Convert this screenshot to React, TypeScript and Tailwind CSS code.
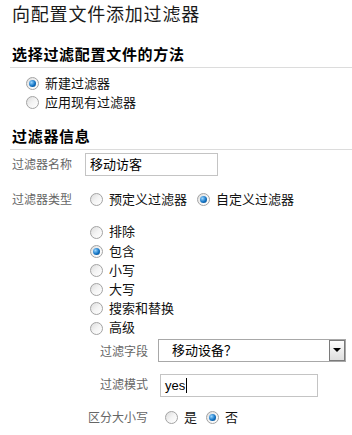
import React from 'react';

const font = { fontFamily: '"Liberation Sans", "Noto Sans CJK SC", sans-serif' };

interface RadioProps {
  checked?: boolean;
}

const Radio = ({ checked }: RadioProps) => (
  <span className="inline-flex h-[13px] w-[13px] shrink-0 items-center justify-center rounded-full border border-[#a3a3a3] bg-gradient-to-br from-[#dcdcdc] via-[#f4f4f4] to-[#ffffff]">
    {checked && (
      <span className="h-[7px] w-[7px] rounded-full bg-[radial-gradient(circle_at_35%_35%,#9ad6ff,#1273c4_55%,#053f74)]" />
    )}
  </span>
);

const RadioItem = ({ checked, label, className = '' }: { checked?: boolean; label: string; className?: string }) => (
  <label className={`flex items-center gap-[6px] text-[13px] text-[#111] ${className}`}>
    <Radio checked={checked} />
    <span>{label}</span>
  </label>
);

const filterTypes = [
  { label: '排除', checked: false },
  { label: '包含', checked: true },
  { label: '小写', checked: false },
  { label: '大写', checked: false },
  { label: '搜索和替换', checked: false },
  { label: '高级', checked: false },
];

export default function App() {
  return (
    <div className="h-[435px] w-[352px] overflow-hidden bg-white" style={font}>
      <h1 className="flex h-[30px] items-center pl-[12px] text-[18px] font-normal tracking-[0.8px] text-[#1a1a1a]">
        向配置文件添加过滤器
      </h1>

      <h2 className="ml-[10px] mt-[14px] flex h-[24px] items-center border-b border-[#dcdcdc] pl-[2px] text-[15px] font-bold tracking-[0.7px] text-black">
        选择过滤配置文件的方法
      </h2>

      <div className="mt-[6px] pl-[26px]">
        <RadioItem checked label="新建过滤器" className="h-[19px]" />
        <RadioItem label="应用现有过滤器" className="h-[19px]" />
      </div>

      <h2 className="ml-[10px] mt-[14px] flex h-[24px] items-center border-b border-[#dcdcdc] pl-[2px] text-[15px] font-bold tracking-[0.7px] text-black">
        过滤器信息
      </h2>

      <div className="mt-[3px] flex h-[23px] items-center pl-[12px]">
        <span className="w-[73px] text-[12px] text-[#666]">过滤器名称</span>
        <div className="flex h-[23px] w-[133px] items-center border border-[#c4c4c4] pl-[4px] text-[13px] text-black">
          移动访客
        </div>
      </div>

      <div className="mt-[14px] flex h-[19px] items-center pl-[12px]">
        <span className="w-[78px] text-[12px] text-[#666]">过滤器类型</span>
        <RadioItem label="预定义过滤器" className="mr-[10px]" />
        <RadioItem checked label="自定义过滤器" />
      </div>

      <div className="mt-[13.5px] pl-[90px]">
        {filterTypes.map((t) => (
          <RadioItem key={t.label} checked={t.checked} label={t.label} className="h-[19.2px]" />
        ))}
      </div>

      <div className="mt-[1.3px] flex h-[23px] items-center">
        <span className="w-[148px] pt-[3px] text-right text-[12px] text-[#666]">过滤字段</span>
        <div className="ml-[10px] flex h-[23px] w-[188px] items-center justify-between border border-[#a8a8a8] pl-[13px] text-[13px] text-black">
          <span>移动设备？</span>
          <span className="flex h-[21px] w-[16px] items-center justify-center border border-[#7a7a7a] bg-gradient-to-b from-[#fdfdfd] to-[#dedede]">
            <span className="h-0 w-0 border-x-[4px] border-t-[4px] border-x-transparent border-t-black" />
          </span>
        </div>
      </div>

      <div className="mt-[12px] flex h-[23px] items-center">
        <span className="w-[148px] text-right text-[12px] text-[#666]">过滤模式</span>
        <div className="ml-[12px] flex h-[23px] w-[158px] items-center border border-[#c4c4c4] pl-[4px] text-[13px] text-black">
          yes
          <span className="ml-[1px] h-[15px] w-[1px] bg-black" />
        </div>
      </div>

      <div className="mt-[11.5px] flex h-[19px] items-center">
        <span className="w-[148px] text-right text-[12px] text-[#666]">区分大小写</span>
        <RadioItem label="是" className="ml-[17px] mr-[9px]" />
        <RadioItem checked label="否" />
      </div>
    </div>
  );
}
